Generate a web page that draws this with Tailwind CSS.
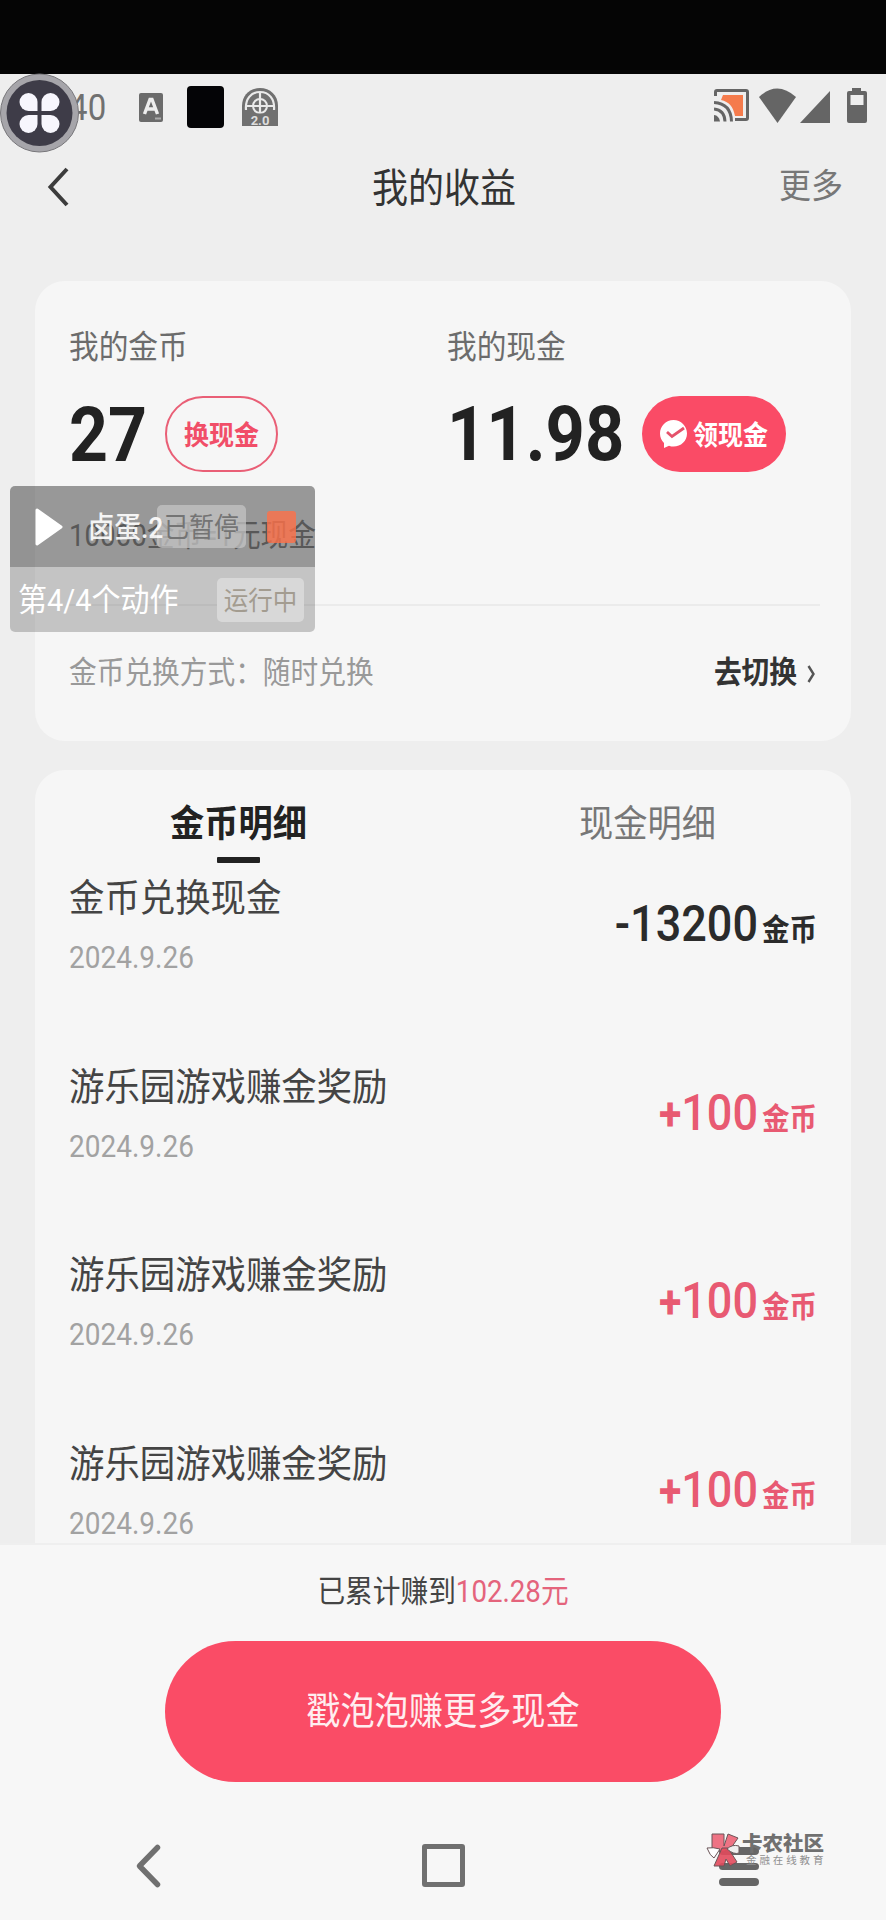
<!DOCTYPE html>
<html lang="zh-CN">
<head>
<meta charset="utf-8">
<title>我的收益</title>
<script src="https://cdn.jsdelivr.net/npm/@tailwindcss/browser@4"></script>
</head>
<body class="bg-black">
<div class="relative flex h-[1920px] w-[886px] flex-col overflow-hidden bg-[#eeeeee] font-['Roboto','Noto_Sans_CJK_SC',sans-serif] leading-none whitespace-nowrap">

  <div class="h-[74px] shrink-0 bg-[#050505]"></div>

  <!-- status bar -->
  <header class="flex h-[66px] shrink-0 items-center justify-between pr-[19px] pl-[24px]">
    <div class="flex items-center">
      <span class="w-[82px] scale-y-112 text-right text-[33px] text-[#707070]">10:40</span>
      <svg class="ml-[33px]" width="24" height="29" viewBox="0 0 24 29"><rect width="24" height="29" rx="2" fill="#6b6b6b"/><path d="M5.500 21 11 6.500h2L18.500 21M8.500 16h7" fill="none" stroke="#eee" stroke-width="3.400"/><path d="M16 25.500h6" stroke="#aaa" stroke-width="2"/></svg>
      <span class="ml-[24px] h-[42px] w-[37px] rounded-[4px] bg-[#040406]"></span>
      <svg class="ml-[18px]" width="36" height="40" viewBox="0 0 36 40">
        <path d="M0 39V19C0 8 8 1 18 1s18 7 18 18v20z" fill="#707070"/>
        <path d="M4 23C3 12 9 5 18 5s15 7 14 18" fill="none" stroke="#eaeaea" stroke-width="2.200"/>
        <path d="M18 5v22M4 19h28" stroke="#eaeaea" stroke-width="2.200"/><circle cx="18" cy="19" r="7" fill="none" stroke="#eaeaea" stroke-width="2"/>
        <path d="M0 28h36" stroke="#707070" stroke-width="3"/>
        <text x="18" y="38" text-anchor="middle" font-size="13" font-weight="700" fill="#ddd" font-family="Roboto">2.0</text>
      </svg>
    </div>
    <svg width="153" height="40" viewBox="0 0 153 40">
      <path d="M9 8h20v21h-8C19 19 15 15 7 13z" fill="#f57b4c"/>
      <path d="M1.500 9V5q0-1.500 1.500-1.500h29q1.500 0 1.500 1.500v26q0 1.500-1.500 1.500H21" fill="none" stroke="#656565" stroke-width="3"/>
      <path d="M0 15.500q17 1 17.500 19M0 22q10.500 1 11 12.500" fill="none" stroke="#656565" stroke-width="3"/>
      <path d="M0 28q5 .500 6 6.500H0z" fill="#656565"/>
      <path d="M45 10q18-17 37 0L63.500 36z" fill="#656565"/>
      <path d="M116 4v32H86z" fill="#656565"/>
      <path d="M138 1h9v3h4q2 0 2 2v28q0 2-2 2h-16q-2 0-2-2V6q0-2 2-2h3z" fill="#656565"/><path d="M136.500 8h13v10h-13z" fill="#eee"/>
    </svg>
  </header>

  <!-- title bar -->
  <nav class="flex h-[92px] shrink-0 items-center justify-between pr-[43px] pl-[45px]">
    <svg class="mt-[2px] w-[64px]" width="64" height="42" viewBox="0 0 64 42"><path d="M22 3 5.500 21 22 39" fill="none" stroke="#3c3c3c" stroke-width="4"/></svg>
    <h1 class="scale-y-110 pt-[6px] text-[36px] text-[#333]">我的收益</h1>
    <span class="scale-y-108 text-[32px] text-[#777]">更多</span>
  </nav>

  <main class="flex h-[1311px] shrink-0 flex-col gap-[29px] overflow-hidden px-[35px] pt-[49px]">
    <!-- balances -->
    <section class="flex h-[460px] shrink-0 flex-col rounded-[30px] bg-[#f6f6f6] pr-[31px] pl-[34px]">
      <div class="flex">
        <div class="w-[378px] pt-[51px]">
          <p class="scale-y-108 text-[29.700px] text-[#6c6c6c]">我的金币</p>
          <div class="mt-[34px] flex h-[76px] items-center">
            <span class="w-[96px] scale-y-112 pt-[2px] text-[68px] font-bold text-[#222]">27</span>
            <button class="flex h-[76px] w-[113px] items-center justify-center rounded-full border-[2.500px] border-[#e95f76] text-[25px] font-bold text-[#f14e68]"><span class="scale-y-110 pt-[3px]">换现金</span></button>
          </div>
        </div>
        <div class="pt-[51px]">
          <p class="scale-y-108 text-[29.700px] text-[#6c6c6c]">我的现金</p>
          <div class="mt-[34px] flex h-[76px] items-center">
            <span class="w-[195px] scale-y-112 pt-[2px] text-[68.600px] font-bold text-[#222]">11.98</span>
            <button class="flex h-[76px] w-[144px] items-center justify-center gap-[6px] rounded-full bg-[#fa4b66] text-[25px] font-bold text-white">
              <svg width="27" height="30" viewBox="0 0 27 30"><path d="M13.500 1C6 1 0 7 0 14.500c0 4 1.500 7 4 9.500v5l5-2.200c1.500.600 3 .800 4.500.800C21 27.600 27 22 27 14.500S21 1 13.500 1z" fill="#fff"/><path d="m7 13 5 4.500L24 9" fill="none" stroke="#e5526b" stroke-width="2.800"/></svg>
              <span class="scale-y-110 pt-[3px]">领现金</span>
            </button>
          </div>
        </div>
      </div>
      <div class="flex h-[134px] items-center border-b-2 border-[#ebebeb] pb-[4px]">
        <p class="scale-y-110 text-[27.700px] text-[#8f8f8f]">10000金币=1元现金</p>
      </div>
      <div class="flex h-[134px] items-center justify-between">
        <p class="scale-y-110 text-[27.700px] text-[#999]">金币兑换方式：随时兑换</p>
        <p class="flex items-center gap-[10px] pr-[4px] text-[27.700px] font-bold text-[#333]"><span class="scale-y-110">去切换</span>
          <svg class="mt-[2px]" width="9" height="18" viewBox="0 0 9 18"><path d="m1.500 1 5 8-5 8" fill="none" stroke="#555" stroke-width="2.400"/></svg></p>
      </div>
    </section>

    <!-- records -->
    <section class="h-[900px] shrink-0 rounded-[30px] bg-[#f6f6f6] pr-[34px] pl-[34px]">
      <div class="flex h-[100px] text-[34.200px]">
        <div class="flex w-[339px] shrink-0 flex-col items-center pt-[37px]">
          <span class="scale-y-108 font-bold text-[#222]">金币明细</span>
          <span class="mt-[16px] h-[5.500px] w-[43px] rounded-[1px] bg-[#222]"></span>
        </div>
        <div class="flex flex-1 flex-col items-center pt-[37px] pl-[70px]"><span class="scale-y-108 text-[#777]">现金明细</span></div>
      </div>
      <div class="flex h-[188.500px] justify-between pt-[11px]">
        <div class="flex flex-col gap-[28px]"><p class="scale-y-106 text-[35.400px] text-[#444]">金币兑换现金</p><p class="scale-y-115 text-[28px] text-[#a2a2a2]">2024.9.26</p></div>
        <p class="flex items-baseline gap-[4px] pt-[20px] font-medium text-[#2b2b2b]"><span class="scale-y-112 text-[45px]">-13200</span><span class="scale-y-108 text-[27.500px] font-bold">金币</span></p>
      </div>
      <div class="flex h-[188.500px] justify-between pt-[11px]">
        <div class="flex flex-col gap-[28px]"><p class="scale-y-106 text-[35.400px] text-[#444]">游乐园游戏赚金奖励</p><p class="scale-y-115 text-[28px] text-[#a2a2a2]">2024.9.26</p></div>
        <p class="flex items-baseline gap-[4px] pt-[20px] font-medium text-[#e85a72]"><span class="scale-y-112 text-[45px]"><b class="text-[41px]">+</b>100</span><span class="scale-y-108 text-[27.500px] font-bold">金币</span></p>
      </div>
      <div class="flex h-[188.500px] justify-between pt-[11px]">
        <div class="flex flex-col gap-[28px]"><p class="scale-y-106 text-[35.400px] text-[#444]">游乐园游戏赚金奖励</p><p class="scale-y-115 text-[28px] text-[#a2a2a2]">2024.9.26</p></div>
        <p class="flex items-baseline gap-[4px] pt-[20px] font-medium text-[#e85a72]"><span class="scale-y-112 text-[45px]"><b class="text-[41px]">+</b>100</span><span class="scale-y-108 text-[27.500px] font-bold">金币</span></p>
      </div>
      <div class="flex h-[188.500px] justify-between pt-[11px]">
        <div class="flex flex-col gap-[28px]"><p class="scale-y-106 text-[35.400px] text-[#444]">游乐园游戏赚金奖励</p><p class="scale-y-115 text-[28px] text-[#a2a2a2]">2024.9.26</p></div>
        <p class="flex items-baseline gap-[4px] pt-[20px] font-medium text-[#e85a72]"><span class="scale-y-112 text-[45px]"><b class="text-[41px]">+</b>100</span><span class="scale-y-108 text-[27.500px] font-bold">金币</span></p>
      </div>
    </section>
  </main>

  <!-- bottom action -->
  <footer class="flex h-[377px] shrink-0 flex-col items-center border-t-2 border-[#efefef] bg-[#f7f7f7]">
    <p class="mt-[33px] scale-y-110 text-[27.700px] text-[#444]">已累计赚到<span class="text-[#e4647c]">102.28元</span></p>
    <button class="mt-[35px] flex h-[141px] w-[556px] items-center justify-center rounded-full bg-[#fa4c66] text-[34.200px] text-[#ffeef0]"><span class="scale-y-110">戳泡泡赚更多现金</span></button>
    <div class="mt-[61px] flex w-full items-center justify-between pr-[127px] pl-[135px]">
      <svg class="w-[40px]" width="40" height="46" viewBox="0 0 40 46"><path d="M22.500 4.500 4.500 23l18 18.500" fill="none" stroke="#707070" stroke-width="5.500" stroke-linecap="round" stroke-linejoin="round"/></svg>
      <span class="mr-[7px] h-[43px] w-[43px] rounded-[3px] border-[5px] border-[#707070]"></span>
      <span class="mt-[2px] flex flex-col gap-[8px]"><i class="h-[7.500px] w-[40px] rounded-full bg-[#666]"></i><i class="h-[7.500px] w-[40px] rounded-full bg-[#666]"></i><i class="h-[7.500px] w-[40px] rounded-full bg-[#666]"></i></span>
    </div>
  </footer>

  <!-- assistive button -->
  <svg class="absolute top-[73px] left-0" width="80" height="80" viewBox="0 0 80 80">
    <circle cx="39.500" cy="40" r="39" fill="#a6a5aa" stroke="#77767a"/><circle cx="39.500" cy="40" r="33" fill="#3e3c48"/>
    <g fill="#f7f6fd"><path d="M37.500 38H28.500a9 9 0 1 1 9-9z"/><path d="M41.500 38h9a9 9 0 1 0-9-9z"/><path d="M37.500 42H28.500a9 9 0 1 0 9 9z"/><path d="M41.500 42h9a9 9 0 1 1-9 9z"/></g>
  </svg>

  <!-- floating script runner -->
  <aside class="absolute top-[486px] left-[10px] flex h-[146px] w-[305px] flex-col overflow-hidden rounded-[5px] text-white">
    <div class="flex h-[81px] items-center bg-black/38 pl-[25px]">
      <svg class="shrink-0" width="28" height="38" viewBox="0 0 28 38"><path d="M2 2 26 19 2 36z" fill="#fff" stroke="#fff" stroke-width="3" stroke-linejoin="round"/></svg>
      <span class="ml-[25px] w-[69px] shrink-0 scale-y-110 pt-[3px] text-[26.500px] font-medium text-white/90">卤蛋.2</span>
      <span class="flex h-[43px] w-[89px] shrink-0 items-center justify-center rounded-[5px] bg-[#c4c4c4]/75 text-[25px] text-[#747474]"><span class="scale-y-110 pt-[2px]">已暂停</span></span>
      <span class="ml-[21px] h-[32px] w-[29px] rounded-[3px] bg-[#ff7048]/80"></span>
    </div>
    <div class="flex h-[65px] items-center justify-between bg-black/20 pr-[11px] pl-[8px]">
      <span class="scale-y-108 pt-[2px] text-[29px]">第4/4个动作</span>
      <span class="flex h-[44px] w-[87px] items-center justify-center rounded-[5px] bg-[#dadada]/90 text-[24.500px] text-[#a39c90]"><span class="scale-y-108 pt-[3px]">运行中</span></span>
    </div>
  </aside>

  <!-- watermark -->
  <div class="absolute top-[1832px] left-[706px] flex items-start">
    <svg width="36" height="36" viewBox="0 0 36 36">
      <g stroke="#6b5558" stroke-width="1"><path d="M6 2h12v12l4-12 10 4-7 10-8 4L6 16z" fill="#ee7384"/><path d="m16 16-8 18h10l2-7 4 7 7-4-9-14z" fill="#e14a5c" fill-opacity=".9"/><path d="M1 16q6-1 13 1l-6 9Q4 24 1 16z" fill="#fff"/><path d="M21 17q5-5 12-3v7q-5 2-12-4z" fill="#eee"/></g>
    </svg>
    <div class="flex flex-col">
      <span class="pt-[2px] text-[20.500px] font-black text-[#707070]">卡农社区</span>
      <span class="mt-[1px] pl-[4px] text-[10.500px] tracking-[2.900px] text-[#909090]">金融在线教育</span>
    </div>
  </div>
</div>
</body>
</html>
